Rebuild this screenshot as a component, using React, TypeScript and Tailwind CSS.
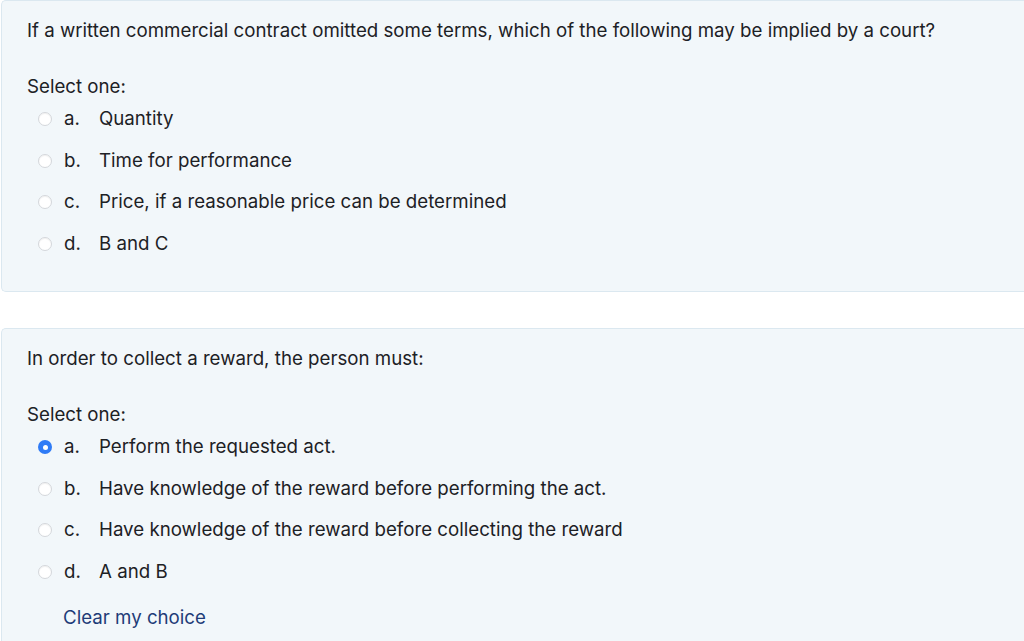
import React from "react";

type Opt = { l: string; t: string; checked?: boolean };

function Radio({ checked }: { checked?: boolean }) {
  if (checked) {
    return (
      <span className="flex h-[14px] w-[14px] items-center justify-center rounded-full bg-[#2f7bf6]">
        <span className="h-[5px] w-[5px] rounded-full bg-white" />
      </span>
    );
  }
  return <span className="h-[14px] w-[14px] rounded-full border border-[#d4d7db] bg-white shadow-[inset_0_1px_1px_rgba(0,0,0,0.06)]" />;
}

function Question({ q, opts, clear, className }: { q: string; opts: Opt[]; clear?: boolean; className: string }) {
  return (
    <div className={"ml-[1px] rounded-l-[5px] border border-r-0 border-[#dbe8f0] bg-[#f2f7fa] pl-[25px] text-[18.7px] leading-[24px] " + className}>
      <div>{q}</div>
      <div className="mt-[32px]">Select one:</div>
      <div className="mt-[8px] flex flex-col gap-[17.5px]">
        {opts.map((o) => (
          <div key={o.l} className="flex h-[24px] items-center">
            <span className="ml-[11px] flex w-[26px]"><Radio checked={o.checked} /></span>
            <span className="w-[35px]">{o.l}</span>
            <span>{o.t}</span>
          </div>
        ))}
      </div>
      {clear && <div className="mt-[22px] pl-[36px] text-[#1f3c78]">Clear my choice</div>}
    </div>
  );
}

export default function App() {
  return (
    <div className="h-[641px] w-[1024px] overflow-hidden bg-white text-[#1d2125]" style={{ fontFamily: "Inter, 'Noto Sans', sans-serif" }}>
      <Question
        className="h-[292px] pt-[18px]"
        q="If a written commercial contract omitted some terms, which of the following may be implied by a court?"
        opts={[
          { l: "a.", t: "Quantity" },
          { l: "b.", t: "Time for performance" },
          { l: "c.", t: "Price, if a reasonable price can be determined" },
          { l: "d.", t: "B and C" },
        ]}
      />
      <Question
        className="mt-[36px] h-[400px] pt-[18px]"
        q="In order to collect a reward, the person must:"
        opts={[
          { l: "a.", t: "Perform the requested act.", checked: true },
          { l: "b.", t: "Have knowledge of the reward before performing the act." },
          { l: "c.", t: "Have knowledge of the reward before collecting the reward" },
          { l: "d.", t: "A and B" },
        ]}
        clear
      />
    </div>
  );
}
